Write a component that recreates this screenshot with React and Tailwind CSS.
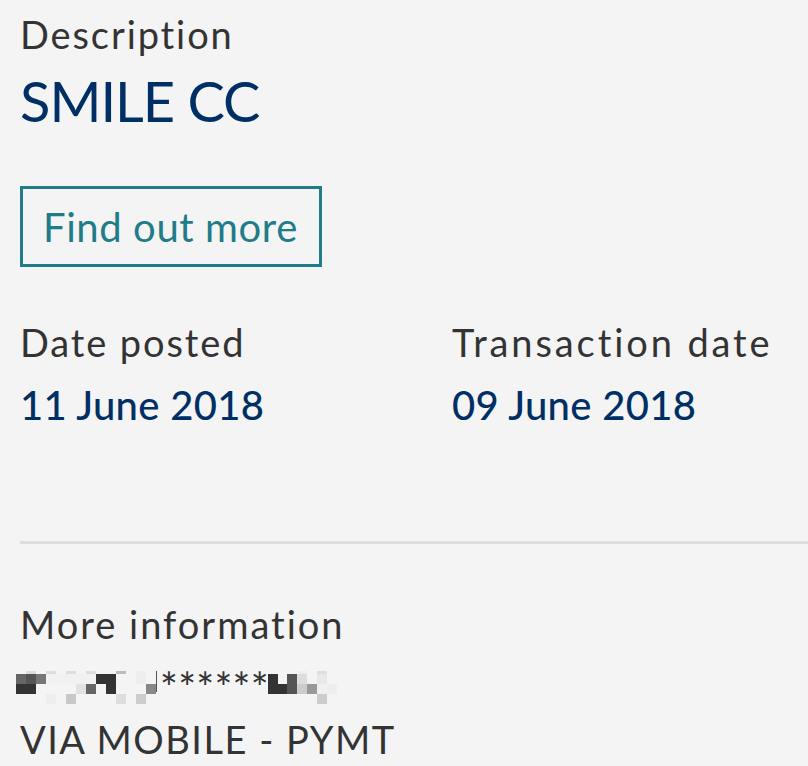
const leftCells = [
  // [x, y, w, h, fill]
  [10, 0, 10, 3, '#dddddd'],
  [30, 0, 10, 3, '#dddddd'],
  [50, 0, 10, 3, '#dddddd'],
  [70, 0, 10, 3, '#dddddd'],
  [100, 0, 10, 3, '#bbbbbb'],
  [120, 0, 10, 3, '#eeeeee'],
  [0, 3, 10, 10, '#666666'],
  [10, 3, 10, 10, '#555555'],
  [20, 3, 10, 10, '#777777'],
  [30, 3, 50, 10, '#f1f1f1'],
  [80, 3, 20, 10, '#333333'],
  [120, 3, 10, 10, '#eeeeee'],
  [0, 13, 20, 10, '#333333'],
  [60, 13, 10, 10, '#e2e2e2'],
  [70, 13, 10, 10, '#666666'],
  [90, 13, 10, 10, '#333333'],
  [130, 13, 10, 10, '#888888'],
  [30, 23, 10, 10, '#eeeeee'],
  [50, 23, 10, 10, '#c8c8c8'],
  [100, 23, 10, 10, '#dddddd'],
  [120, 23, 10, 10, '#cccccc'],
  [140, 0, 1, 21, '#555555'],
];

const rightCells = [
  [0, 3, 10, 20, '#333333'],
  [10, 13, 9, 10, '#333333'],
  [19, 3, 10, 20, '#555555'],
  [29, 0, 10, 3, '#eeeeee'],
  [29, 3, 10, 10, '#dddddd'],
  [29, 13, 10, 10, '#cccccc'],
  [39, 13, 10, 10, '#999999'],
  [49, 0, 10, 3, '#dddddd'],
  [49, 3, 10, 10, '#e8e8e8'],
  [49, 13, 10, 10, '#f0f0f0'],
  [49, 23, 10, 10, '#cccccc'],
  [59, 13, 10, 10, '#eeeeee'],
];

function Mosaic({ cells, width }) {
  return (
    <svg width={width} height="33" viewBox={`0 0 ${width} 33`} className="shrink-0">
      {cells.map(([x, y, w, h, fill], i) => (
        <rect key={i} x={x} y={y} width={w} height={h} fill={fill} />
      ))}
    </svg>
  );
}

export default function App() {
  return (
    <div
      className="min-h-screen w-full bg-[#f4f4f4] pl-5 overflow-hidden text-[#333333] [font-variant-ligatures:none]"
      style={{ fontFamily: 'Lato, "Noto Sans", sans-serif' }}
    >
      <div className="flex flex-col">
        {/* Description */}
        <p className="mt-[11px] text-[38px] leading-[46px] tracking-[1.9px]">Description</p>
        <p className="mt-[12px] text-[56px] leading-[64px] tracking-[-1px] text-[#002f65]">SMILE CC</p>

        <div className="mt-[53px]">
          <button className="h-[81px] border-[3px] border-[#1f7c88] pl-5 pr-[21px] text-[40px] leading-[46px] tracking-[0.6px] text-[#1f7c88]">
            Find out more
          </button>
        </div>

        {/* Dates */}
        <div className="mt-[52px] grid grid-cols-[432px_1fr]">
          <div>
            <p className="text-[38px] leading-[46px] tracking-[1.9px]">Date posted</p>
            <p className="mt-4 text-[40px] leading-[48px] tracking-[0.3px] font-medium text-[#002f65]">11 June 2018</p>
          </div>
          <div>
            <p className="text-[38px] leading-[46px] tracking-[2.9px] whitespace-nowrap">Transaction date</p>
            <p className="mt-4 text-[40px] leading-[48px] tracking-[0.3px] font-medium text-[#002f65]">09 June 2018</p>
          </div>
        </div>

        <div className="mt-[112px] h-[3px] bg-[#dedede]" />

        {/* More information */}
        <p className="mt-[57px] text-[38px] leading-[46px] tracking-[2px]">More information</p>
        <div className="mt-6 ml-[-4px] flex h-[33px] items-start">
          <Mosaic cells={leftCells} width={144} />
          <span className="w-[108px] whitespace-nowrap text-[42px] leading-[33px] tracking-[0.3px] text-[#333333]">******</span>
          <Mosaic cells={rightCells} width={70} />
        </div>
        <p className="mt-3 text-[38px] leading-[46px] tracking-[1.5px]">VIA MOBILE - PYMT</p>
      </div>
    </div>
  );
}
